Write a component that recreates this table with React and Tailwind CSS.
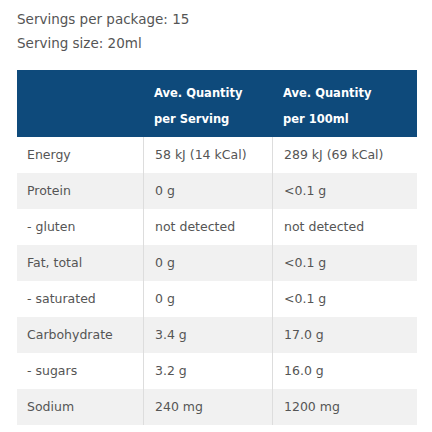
export default function App() {
  const rows = [
    ["Energy", "58 kJ (14 kCal)", "289 kJ (69 kCal)"],
    ["Protein", "0 g", "<0.1 g"],
    ["- gluten", "not detected", "not detected"],
    ["Fat, total", "0 g", "<0.1 g"],
    ["- saturated", "0 g", "<0.1 g"],
    ["Carbohydrate", "3.4 g", "17.0 g"],
    ["- sugars", "3.2 g", "16.0 g"],
    ["Sodium", "240 mg", "1200 mg"],
  ];
  return (
    <div className="w-[432px] h-[432px] bg-white text-[#555555] font-['DejaVu_Sans',sans-serif]">
      <div className="pl-[17px] pt-[7px] text-[13.5px] leading-[24px]">
        <p>Servings per package: 15</p>
        <p>Serving size: 20ml</p>
      </div>
      <div className="ml-[17px] mt-[15px] w-[400px]">
        <div className="grid grid-cols-[127px_129px_144px] bg-[#0e4a7b] text-white font-bold text-[11.5px] leading-[26px] h-[67px] pt-[10px]">
          <div></div>
          <div className="pl-[10px]">
            <div>Ave. Quantity</div>
            <div>per Serving</div>
          </div>
          <div className="pl-[10px]">
            <div>Ave. Quantity</div>
            <div>per 100ml</div>
          </div>
        </div>
        {rows.map((r, i) => (
          <div
            key={i}
            className={`grid grid-cols-[127px_129px_144px] h-[36px] text-[12.5px] ${i % 2 === 1 ? "bg-[#f1f1f1]" : "bg-white"}`}
          >
            <div className="pl-[10px] pt-[1px] flex items-center border-r border-[#dddddd]">{r[0]}</div>
            <div className="pl-[11px] pt-[1px] flex items-center border-r border-[#dddddd]">{r[1]}</div>
            <div className="pl-[11px] pt-[1px] flex items-center">{r[2]}</div>
          </div>
        ))}
      </div>
    </div>
  );
}
